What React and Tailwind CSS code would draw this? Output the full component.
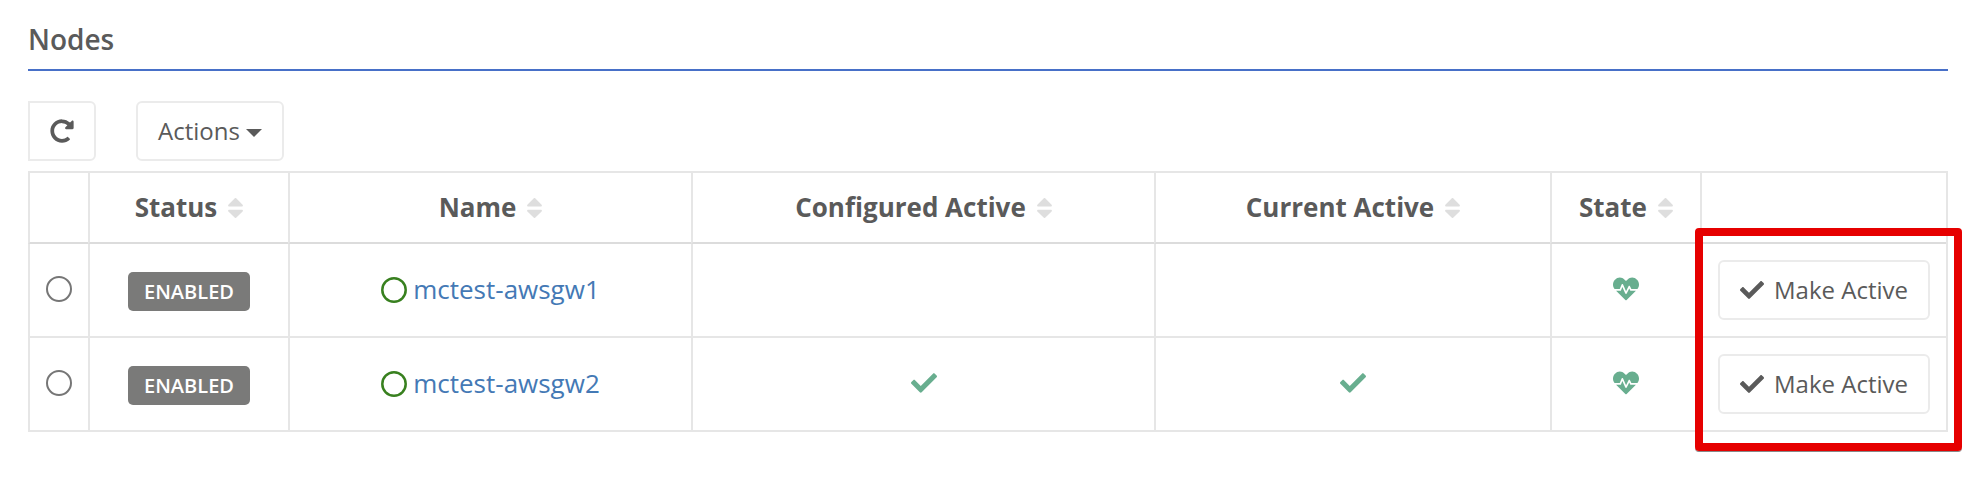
import React from "react";
import { FaCheck, FaHeartbeat, FaRedoAlt } from "react-icons/fa";

const COLUMNS = ["", "Status", "Name", "Configured Active", "Current Active", "State", ""];

const NODES = [
  { name: "mctest-awsgw1", configured: false, current: false },
  { name: "mctest-awsgw2", configured: true, current: true },
];

function SortIcon() {
  return (
    <svg className="ml-[11px] h-5 w-[15px] shrink-0 fill-[#dedede]" viewBox="0 0 15 20">
      <path d="M6.6.4a1.3 1.3 0 0 1 1.800 0l6.200 6.400c.600.700.300 1.700-.600 1.700H1C.100 8.500-.200 7.500.400 6.800z" />
      <path d="M6.600 19.600a1.300 1.300 0 0 0 1.800 0l6.200-6.100c.600-.700.300-1.700-.600-1.700H1c-.900 0-1.200 1-.600 1.700z" />
    </svg>
  );
}

function Cell({ children }) {
  return (
    <div className="flex h-[94px] items-center justify-center border-b-2 border-l-2 border-[#e6e6e6]">
      {children}
    </div>
  );
}

function NodeRow({ node }) {
  return (
    <>
      <Cell>
        <span className="mb-[2px] h-[26px] w-[26px] rounded-full border-2 border-[#767676]" />
      </Cell>
      <Cell>
        <span className="mt-[3px] flex h-[39px] w-[122px] items-center justify-center rounded-[5px] bg-[#7a7a79] text-[20px] font-semibold text-white">
          ENABLED
        </span>
      </Cell>
      <Cell>
        <svg className="mb-px mr-[6px] h-[26px] w-[26px]" viewBox="0 0 26 26" fill="none">
          <circle cx="13" cy="13" r="11.700" stroke="#38801f" strokeWidth="2.500" />
        </svg>
        <a className="mb-[2px] text-[26px] text-[#4479b5]">{node.name}</a>
      </Cell>
      <Cell>{node.configured && <FaCheck className="mb-[2px] h-[26px] w-[26px] text-[#68ae8f]" />}</Cell>
      <Cell>{node.current && <FaCheck className="mb-[2px] h-[26px] w-[26px] text-[#68ae8f]" />}</Cell>
      <Cell>
        <FaHeartbeat className="mb-[2px] h-[26px] w-[26px] text-[#68ae8f]" />
      </Cell>
      <Cell>
        <button className="flex h-[60px] w-[212px] items-center rounded-[6px] border-2 border-[#ebebeb] pl-5 text-[24px]">
          <FaCheck className="mr-[10px] h-6 w-6" />
          Make Active
        </button>
      </Cell>
    </>
  );
}

export default function App() {
  return (
    <main className="relative h-[490px] w-[1972px] overflow-hidden bg-white pl-7 font-['Open_Sans',sans-serif] text-[#5a5a5a]">
      <h1 className="flex h-[71px] w-[1920px] items-center border-b-2 border-[#4870c8] pt-[9px] text-[28px] font-semibold">
        Nodes
      </h1>
      <div className="flex gap-10 pt-[30px]">
        <button className="flex h-[60px] w-[68px] items-center justify-center rounded-r-[6px] border-2 border-[#ebebeb]">
          <FaRedoAlt className="h-6 w-6" />
        </button>
        <button className="flex h-[60px] w-[148px] items-center rounded-[6px] border-2 border-[#ebebeb] pl-5 text-[24px]">
          Actions
          <span className="ml-[6px] mt-[3px] border-x-8 border-t-8 border-x-transparent border-t-[#5a5a5a]" />
        </button>
      </div>
      <section className="mt-[10px] grid w-[1920px] grid-cols-[60px_200px_403px_463px_396px_150px_246px] border-r-2 border-t-2 border-[#e6e6e6]">
        {COLUMNS.map((title, i) => (
          <div
            key={i}
            className="flex h-[71px] items-center justify-center border-b-2 border-l-2 border-b-[#dcdcdc] border-l-[#e6e6e6] text-[26px] font-bold"
          >
            {title && (
              <>
                <span>{title}</span>
                <SortIcon />
              </>
            )}
          </div>
        ))}
        {NODES.map((node) => (
          <NodeRow key={node.name} node={node} />
        ))}
      </section>
      <div className="absolute left-[1695px] top-[228px] h-[223px] w-[267px] rounded-[4px] border-8 border-[#e60000] shadow-[0_1px_0_#888]" />
    </main>
  );
}
